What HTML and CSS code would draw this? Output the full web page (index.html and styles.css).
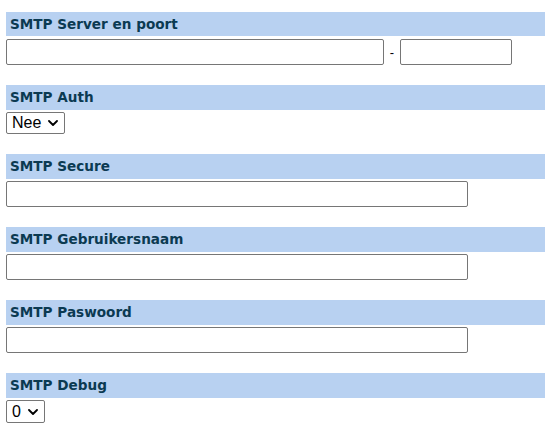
FILE: index.html
```html
<!DOCTYPE html>
<html>
<head>
<meta charset="utf-8">
<link rel="stylesheet" href="styles.css">
</head>
<body>
<div class="section">
  <div class="label">SMTP Server en poort</div>
  <div class="row">
    <input class="inp server" type="text"><span class="dash">-</span><input class="inp port" type="text">
  </div>
</div>
<div class="section">
  <div class="label">SMTP Auth</div>
  <div class="row">
    <select class="sel auth"><option>Nee</option><option>Ja</option></select>
  </div>
</div>
<div class="section">
  <div class="label">SMTP Secure</div>
  <div class="row"><input class="inp wide" type="text"></div>
</div>
<div class="section">
  <div class="label">SMTP Gebruikersnaam</div>
  <div class="row"><input class="inp wide" type="text"></div>
</div>
<div class="section">
  <div class="label">SMTP Paswoord</div>
  <div class="row"><input class="inp wide" type="password"></div>
</div>
<div class="section">
  <div class="label">SMTP Debug</div>
  <div class="row">
    <select class="sel debug"><option>0</option><option>1</option><option>2</option></select>
  </div>
</div>
</body>
</html>
```
FILE: styles.css
```css
html, body {
  background: #ffffff;
}
body {
  margin: 12px 0 0 6px;
  font-family: "Liberation Sans", Arial, sans-serif;
  font-size: 13px;
}
.section {
  margin-bottom: 20px;
}
.label {
  height: 25px;
  line-height: 25px;
  background: #b8d1f1;
  color: #0b3a52;
  font-family: Verdana, "DejaVu Sans", sans-serif;
  font-weight: bold;
  font-size: 13.6px;
  padding-left: 4px;
}
.section:first-child .label {
  height: 24px;
  line-height: 24px;
}
.row {
  margin-top: 2px;
  display: flex;
  align-items: center;
}
.section:first-child .row {
  margin-top: 3px;
}
.inp {
  box-sizing: border-box;
  height: 26px;
  margin: 0;
  border: 1px solid #767676;
  border-radius: 2px;
  background: #fff;
  font-family: "Liberation Sans", Arial, sans-serif;
  font-size: 13px;
}
.server { width: 378px; }
.port { width: 112px; }
.wide { width: 462px; }
.dash {
  width: 16px;
  text-align: center;
  font-size: 13px;
  color: #000;
}
.sel {
  -webkit-appearance: none;
  appearance: none;
  box-sizing: border-box;
  margin: 0;
  height: 22px;
  padding: 0 0 0 5px;
  font-family: "Liberation Sans", Arial, sans-serif;
  font-size: 16px;
  line-height: 20px;
  border: 1px solid #767676;
  border-radius: 2px;
  color: #000;
  background-color: #fff;
  background-image: url("data:image/svg+xml;utf8,<svg xmlns='http://www.w3.org/2000/svg' width='10' height='6' viewBox='0 0 10 6'><path d='M1 1 L5 5 L9 1' fill='none' stroke='black' stroke-width='1.8' stroke-linecap='round' stroke-linejoin='round'/></svg>");
  background-repeat: no-repeat;
  background-position: right 6px center;
  background-size: 10px 6px;
}
.auth { width: 59px; }
.debug { width: 39px; height: 23px; }
```
